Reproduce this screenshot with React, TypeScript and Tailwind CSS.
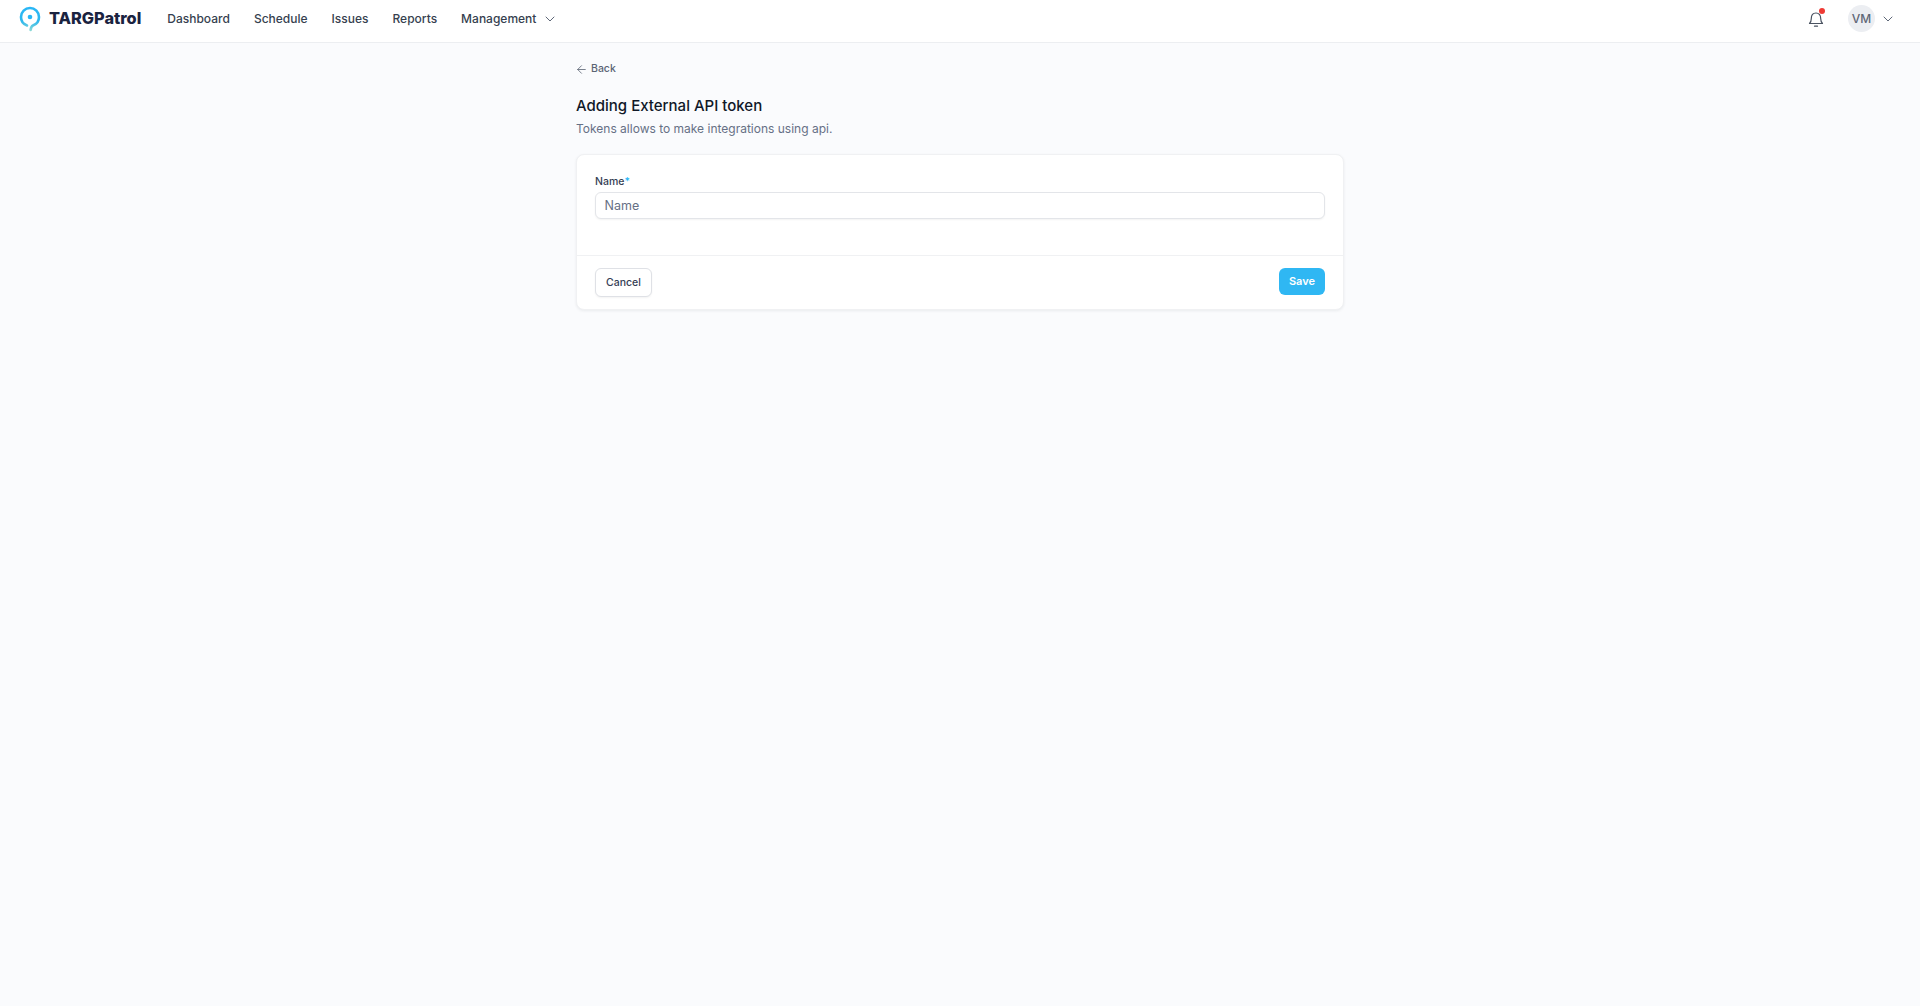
import React from "react";
import { ArrowLeft, ChevronDown } from "lucide-react";

const font = { fontFamily: "Inter, sans-serif" };

const navItems = ["Dashboard", "Schedule", "Issues", "Reports"];

const Logo = () => (
  <svg width="22" height="26" viewBox="0 0 22 26" fill="none">
    <defs>
      <linearGradient id="pin" x1="11" y1="1" x2="11" y2="25" gradientUnits="userSpaceOnUse">
        <stop offset="0" stopColor="#29b6f6" />
        <stop offset="0.6" stopColor="#2fb8ee" />
        <stop offset="1" stopColor="#8ddad5" />
      </linearGradient>
    </defs>
    <path
      d="M8 19.5C4.4 18.2 2 15 2 11a9 9 0 0 1 18 0c0 4-2.4 7.2-6 8.5-1.2.5-2 1.7-2.4 4.5"
      stroke="url(#pin)"
      strokeWidth="2.6"
      strokeLinecap="round"
    />
    <circle cx="11" cy="11" r="2.3" fill="#29b6f6" />
  </svg>
);

const Header = () => (
  <header className="h-[43px] bg-white border-b border-[#eceef1] flex items-center pl-[19px] pr-[24px]">
    <div className="flex items-center gap-[8px] mb-[5px]">
      <Logo />
      <span className="text-[16.3px] font-extrabold text-[#1a2340]">TARGPatrol</span>
    </div>
    <nav className="flex items-center gap-6 ml-[26px] mb-[5px] text-[12px] font-medium text-[#363f4f]">
      {navItems.map((item) => (
        <a key={item}>{item}</a>
      ))}
      <a className="flex items-center gap-[6px]">
        Management
        <ChevronDown className="size-4 text-[#5f6878]" strokeWidth={1.5} />
      </a>
    </nav>
    <div className="ml-auto flex items-center mb-[5px]">
      <div className="relative">
        <svg width="16" height="18" viewBox="0 0 16 18" fill="none" stroke="#4a5361" strokeWidth="1.2" strokeLinejoin="round" strokeLinecap="round">
          <path d="M1.5 13.5c1.2-1.2 1.8-2.4 1.8-5C3.3 5 5.2 3 8 3s4.7 2 4.7 5.5c0 2.6.6 3.8 1.8 5z" />
          <path d="M6.5 16.2h3" />
        </svg>
        <span className="absolute -top-[2px] right-[-1px] size-[6px] rounded-full bg-[#ef3a34]" />
      </div>
      <div className="ml-[24px] size-[27px] rounded-full bg-[#eceef2] flex items-center justify-center text-[12px] font-medium text-[#5f6776]">
        VM
      </div>
      <ChevronDown className="size-4 ml-[5px] text-[#5f6878]" strokeWidth={1.5} />
    </div>
  </header>
);

export default function App() {
  return (
    <div className="min-h-[1006px] bg-[#fafbfd]" style={font}>
      <Header />
      <main className="w-[768px] mx-auto">
        <a className="flex items-center gap-[4px] pt-[18px] text-[10.5px] font-medium text-[#5b6474] leading-[16px]">
          <ArrowLeft className="size-[13px] -ml-px -mr-px" strokeWidth={1.5} />
          Back
        </a>
        <h1 className="mt-[17px] text-[15px] leading-6 font-medium text-[#101828]">Adding External API token</h1>
        <p className="mt-[1px] text-[12px] leading-5 text-[#667085]">Tokens allows to make integrations using api.</p>
        <div className="mt-[15px] bg-white rounded-lg border border-[#f0f1f3] shadow-[0_1px_3px_rgba(16,24,40,0.07)]">
          <div className="px-[18px] pt-[19px] pb-[36px]">
            <label className="block text-[10.5px] leading-[16px] font-medium text-[#344054]">
              Name<span className="text-[#29b6f6]">*</span>
            </label>
            <input
              placeholder="Name"
              className="mt-[2px] w-full h-[27px] px-[8.5px] rounded-md border border-[#e3e5e9] shadow-xs bg-white text-[12.5px] placeholder:text-[#667085] outline-none"
            />
          </div>
          <div className="border-t border-[#f0f1f3] px-[18px] pt-[12px] pb-[12px] flex items-start justify-between">
            <button className="h-[29px] w-[57px] rounded-md border border-[#dfe1e6] shadow-xs bg-white text-[10.5px] font-medium text-[#344054]">
              Cancel
            </button>
            <button className="h-[27px] w-[46px] rounded-md bg-[#2fb7f3] text-[11px] font-semibold text-white">
              Save
            </button>
          </div>
        </div>
      </main>
    </div>
  );
}
